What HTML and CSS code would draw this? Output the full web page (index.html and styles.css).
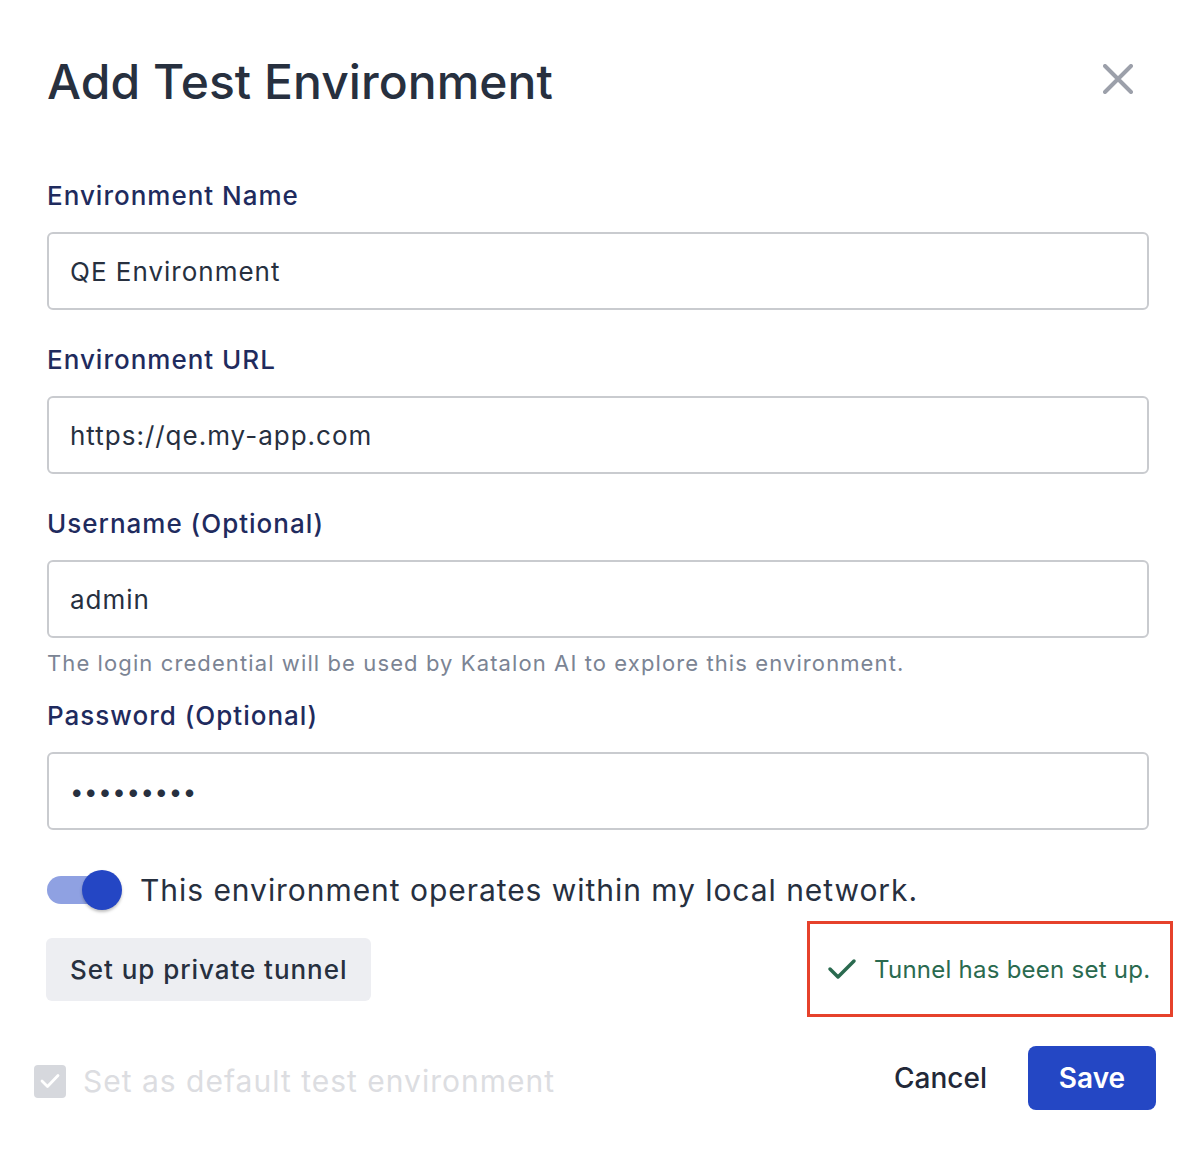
FILE: index.html
```html
<!DOCTYPE html>
<html>
<head>
<meta charset="utf-8">
<link rel="stylesheet" href="styles.css">
</head>
<body>
<div class="dialog">
  <div class="header">
    <h1 class="title">Add Test Environment</h1>
    <button class="close" aria-label="Close">
      <svg width="30" height="30" viewBox="0 0 30 30"><path d="M2 2 L28 28 M28 2 L2 28" stroke="#9ca0aa" stroke-width="4" stroke-linecap="round"/></svg>
    </button>
  </div>

  <div class="field">
    <label class="label">Environment Name</label>
    <input class="input" type="text" value="QE Environment" readonly>
  </div>
  <div class="field">
    <label class="label">Environment URL</label>
    <input class="input" type="text" value="https://qe.my-app.com" readonly>
  </div>
  <div class="field field-help">
    <label class="label">Username (Optional)</label>
    <input class="input" type="text" value="admin" readonly>
    <div class="help">The login credential will be used by Katalon AI to explore this environment.</div>
  </div>
  <div class="field">
    <label class="label">Password (Optional)</label>
    <div class="input dots">•••••••••</div>
  </div>

  <div class="toggle-row">
    <span class="toggle"><span class="track"></span><span class="knob"></span></span>
    <span class="toggle-text">This environment operates within my local network.</span>
  </div>

  <div class="tunnel-row">
    <button class="btn-secondary">Set up private tunnel</button>
    <div class="status">
      <svg width="30" height="22" viewBox="0 0 30 22"><path d="M3 11 L11 19 L27 3" fill="none" stroke="#2a6a4f" stroke-width="3.5" stroke-linecap="round" stroke-linejoin="round"/></svg>
      <span class="status-text">Tunnel has been set up.</span>
    </div>
  </div>

  <div class="footer">
    <label class="check">
      <span class="box"><svg width="22" height="18" viewBox="0 0 22 18"><path d="M3 9 L8.5 14.5 L19 3.5" fill="none" stroke="#fff" stroke-width="2.8" stroke-linecap="round" stroke-linejoin="round"/></svg></span>
      <span class="check-text">Set as default test environment</span>
    </label>
    <div class="actions">
      <button class="btn-text">Cancel</button>
      <button class="btn-primary">Save</button>
    </div>
  </div>
</div>
</body>
</html>
```
FILE: styles.css
```css
* { box-sizing: border-box; }
body {
  margin: 0;
  background: #fff;
  font-family: Inter, "Noto Sans", sans-serif;
  color: #27303f;
}
.dialog {
  padding: 53px 45px 40px 47px;
}
.header {
  display: flex;
  justify-content: space-between;
  align-items: center;
  margin-bottom: 67px;
}
.title {
  margin: 0;
  font-size: 48px;
  line-height: 58px;
  font-weight: 500;
  color: #27303f;
  letter-spacing: 0.05px;
}
.close {
  border: 0;
  background: none;
  padding: 0;
  margin-right: 16px;
  margin-top: -6px;
  width: 30px;
  height: 30px;
  display: flex;
}
.field {
  display: flex;
  flex-direction: column;
  margin-bottom: 32px;
}
.field-help { margin-bottom: 22px; }
.label {
  font-size: 26px;
  line-height: 36px;
  font-weight: 500;
  color: #1f2b5e;
  margin-bottom: 18px;
  letter-spacing: 1px;
}
.input {
  height: 78px;
  border: 2px solid #c9cbcf;
  border-radius: 6px;
  padding: 0 21px;
  font-family: inherit;
  font-size: 26px;
  color: #27303f;
  background: #fff;
  outline: none;
  width: 100%;
  letter-spacing: 1px;
}
.dots {
  display: flex;
  align-items: center;
  letter-spacing: 0.6px;
  font-size: 24px;
  padding-left: 21px;
}
.help {
  margin-top: 12px;
  font-size: 22px;
  line-height: 26px;
  color: #7b8494;
  letter-spacing: 1.1px;
}
.toggle-row {
  display: flex;
  align-items: center;
  height: 40px;
  margin-top: 40px;
}
.toggle {
  position: relative;
  width: 75px;
  height: 40px;
  flex: none;
}
.track {
  position: absolute;
  left: 0;
  top: 6px;
  width: 62px;
  height: 28px;
  border-radius: 14px;
  background: #8fa1e2;
}
.knob {
  position: absolute;
  left: 35px;
  top: 0;
  width: 40px;
  height: 40px;
  border-radius: 50%;
  background: #2446c4;
  box-shadow: 0 2px 3px rgba(0,0,0,0.25);
}
.toggle-text {
  margin-left: 18px;
  font-size: 30px;
  color: #27303f;
  letter-spacing: 0.95px;
}
.tunnel-row {
  display: flex;
  justify-content: space-between;
  align-items: center;
  margin-top: 11px;
  margin-right: -24px;
}
.btn-secondary {
  height: 63px;
  padding: 0 24px;
  border: 0;
  border-radius: 6px;
  background: #edeef2;
  font-family: inherit;
  font-size: 26px;
  font-weight: 500;
  color: #27303f;
  margin-left: -1px;
  letter-spacing: 0.95px;
}
.status {
  display: flex;
  align-items: center;
  height: 96px;
  width: 366px;
  border: 3px solid #e6412b;
  padding: 0 0 0 17px;
}
.status-text {
  margin-left: 17px;
  font-size: 24px;
  color: #2a6a4f;
  letter-spacing: 0.25px;
}
.footer {
  display: flex;
  justify-content: space-between;
  align-items: center;
  margin-top: 29px;
  margin-right: -7px;
}
.check {
  display: flex;
  align-items: center;
  margin-left: -13px;
  margin-top: 6px;
}
.box {
  width: 32px;
  height: 33px;
  border-radius: 4px;
  background: #d6d8dd;
  display: flex;
  align-items: center;
  justify-content: center;
}
.check-text {
  margin-left: 17px;
  font-size: 30px;
  color: #dcdde1;
  letter-spacing: 1px;
}
.actions {
  display: flex;
  align-items: center;
}
.btn-text {
  border: 0;
  background: none;
  font-family: inherit;
  font-size: 28px;
  font-weight: 500;
  color: #222838;
  padding: 0;
  margin-right: 41px;
}
.btn-primary {
  width: 128px;
  height: 64px;
  border: 0;
  border-radius: 8px;
  background: #2447c4;
  color: #fff;
  font-family: inherit;
  font-size: 28px;
  font-weight: 600;
}
```
